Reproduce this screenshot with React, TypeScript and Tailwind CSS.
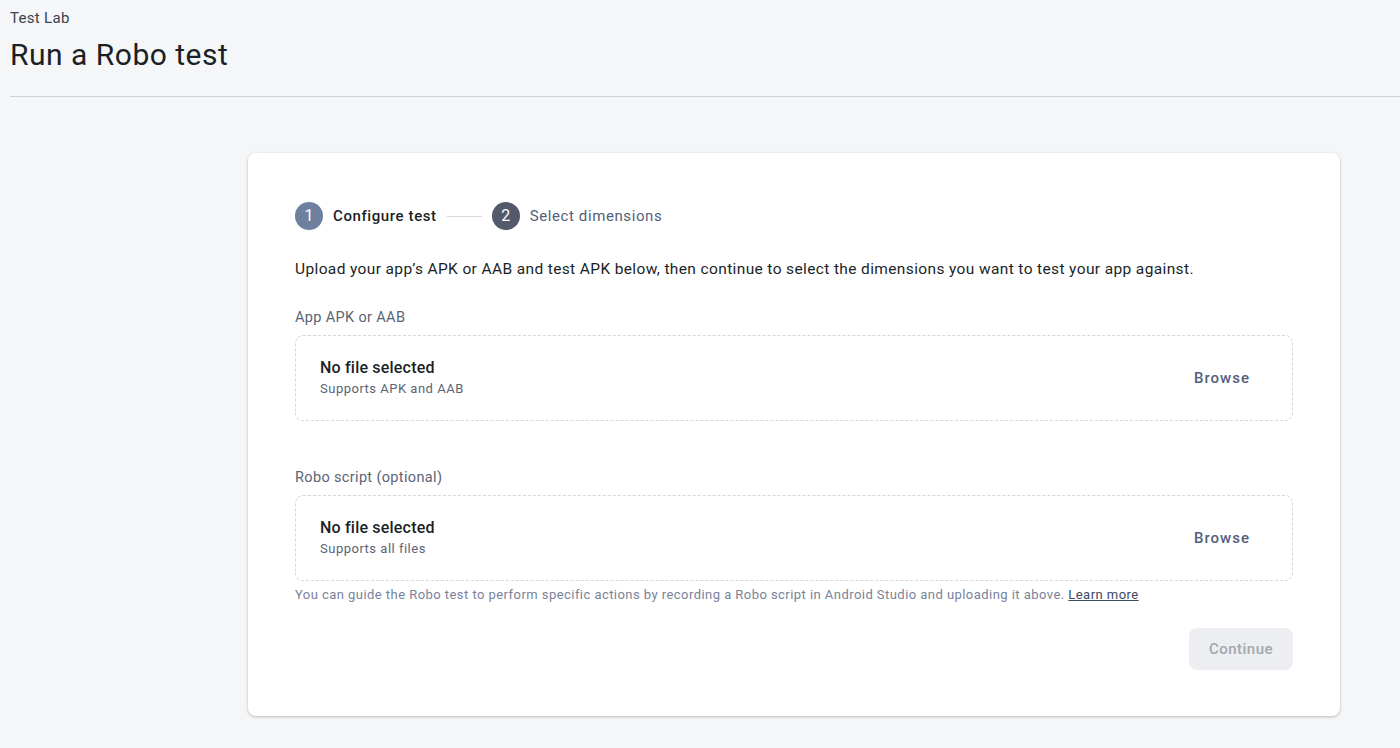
export default function App() {
  const font = { fontFamily: "Roboto, 'Liberation Sans', sans-serif" };

  const FileBox = ({ hint }: { hint: string }) => (
    <div className="flex h-[86px] items-center justify-between rounded-lg border border-dashed border-[#d3d6db] pl-6 pr-[42px]">
      <div className="flex flex-col">
        <span className="text-[16px] font-medium leading-[20px] tracking-[0.2px] text-[#1b1f26]">No file selected</span>
        <span className="mt-[2px] text-[13px] leading-[18px] tracking-[0.5px] text-[#5b6475]">{hint}</span>
      </div>
      <button className="text-[15px] font-medium tracking-[1px] text-[#53607a]">Browse</button>
    </div>
  );

  return (
    <div className="min-h-[748px] w-full bg-[#f5f6f8]" style={font}>
      <header className="px-[10px] pt-[8px]">
        <div className="text-[15px] leading-[20px] tracking-[0.3px] text-[#3c4350]">Test Lab</div>
        <h1 className="mt-[8px] text-[30px] leading-[38px] tracking-[0.5px] text-[#1b1f26]">Run a Robo test</h1>
      </header>
      <div className="ml-[10px] mt-[22px] h-px bg-[#cfd2d7]" />

      <div className="flex pl-[248px] pr-[60px] pt-[56px]">
        <div className="w-[1092px] rounded-lg bg-white px-[47px] pb-[46px] pt-[49px] shadow-[0_1px_3px_rgba(0,0,0,0.25)]">
          <div className="flex items-center">
            <span className="flex h-[28px] w-[28px] items-center justify-center rounded-full bg-[#6f7f9e] text-[16px] text-white">1</span>
            <span className="ml-[10px] text-[15px] font-medium tracking-[0.6px] text-[#1b1f26]">Configure test</span>
            <span className="ml-[10px] h-px w-[35px] bg-[#d6d9de]" />
            <span className="ml-[10px] flex h-[28px] w-[28px] items-center justify-center rounded-full bg-[#525a6b] text-[16px] text-white">2</span>
            <span className="ml-[10px] text-[15px] tracking-[0.6px] text-[#53607a]">Select dimensions</span>
          </div>

          <p className="mt-[28px] text-[15.5px] leading-[22px] tracking-[0.37px] text-[#1b1f26]">
            Upload your app’s APK or AAB and test APK below, then continue to select the dimensions you want to test your app against.
          </p>

          <div className="mt-[28px] text-[14.5px] leading-[20px] tracking-[0.35px] text-[#5b6475]">App APK or AAB</div>
          <div className="mt-[7px]">
            <FileBox hint="Supports APK and AAB" />
          </div>

          <div className="mt-[47px] text-[14.5px] leading-[20px] tracking-[0.35px] text-[#5b6475]">Robo script (optional)</div>
          <div className="mt-[7px]">
            <FileBox hint="Supports all files" />
          </div>
          <p className="mt-[5px] text-[13px] leading-[18px] tracking-[0.45px] text-[#78839a]">
            You can guide the Robo test to perform specific actions by recording a Robo script in Android Studio and uploading it above.{" "}
            <a className="text-[#3c4a66] underline">Learn more</a>
          </p>

          <div className="mt-[24px] flex justify-end">
            <button className="h-[42px] w-[104px] rounded-lg bg-[#eceef1] text-[15px] font-medium tracking-[0.5px] text-[#a3a7ae]">Continue</button>
          </div>
        </div>
      </div>
    </div>
  );
}
